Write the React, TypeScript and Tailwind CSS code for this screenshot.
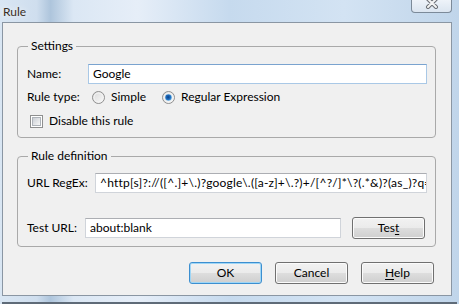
import React from "react";

const font = { fontFamily: 'Lato, "Noto Sans", sans-serif' };

function Radio({ checked }: { checked?: boolean }) {
  return (
    <svg width="13" height="13" viewBox="0 0 13 13" className="shrink-0">
      <defs>
        <linearGradient id="rg" x1="0" y1="0" x2="1" y2="1">
          <stop offset="0" stopColor="#d8d8d8" />
          <stop offset="1" stopColor="#fbfbfb" />
        </linearGradient>
        <radialGradient id="rd" cx="0.45" cy="0.45" r="0.6">
          <stop offset="0" stopColor="#0b3f87" />
          <stop offset="0.6" stopColor="#1f6fc0" />
          <stop offset="1" stopColor="#79c2f2" />
        </radialGradient>
      </defs>
      <circle cx="6.5" cy="6.5" r="6" fill="url(#rg)" stroke="#8f8f8f" />
      <circle cx="6.5" cy="6.5" r="4.5" fill="none" stroke="#f4f4f4" />
      {checked && <circle cx="6.5" cy="6.5" r="3.3" fill="url(#rd)" />}
    </svg>
  );
}

function Check() {
  return (
    <div className="w-[13px] h-[13px] shrink-0 border border-[#8e8f8f] bg-white p-[1px]">
      <div className="w-full h-full border border-[#aeb3b9] bg-[linear-gradient(135deg,#cbcfd5,#f7f7f7)]" />
    </div>
  );
}

function Btn({ children, focused, className = "" }: any) {
  return (
    <div
      className={`w-[73px] h-[22px] shrink-0 rounded-[3px] border flex items-center justify-center text-[12px] text-black bg-[linear-gradient(#f2f2f2_0%,#ebebeb_48%,#dddddd_52%,#cfcfcf_100%)] ${
        focused
          ? "border-[#3c8fd0] shadow-[inset_0_0_0_1px_#9fd6f6]"
          : "border-[#707070] shadow-[inset_0_0_0_1px_#fbfbfb]"
      } ${className}`}
    >
      {children}
    </div>
  );
}

function TextBox({ value, className = "", blue }: any) {
  return (
    <div
      className={`h-[20px] min-w-0 bg-white border overflow-hidden whitespace-nowrap flex items-center px-[4px] text-[12px] text-black ${
        blue ? "border-[#a9c8e6] border-t-[#7aa3cf]" : "border-[#d0d4da] border-t-[#acaeb3]"
      } ${className}`}
    >
      {value}
    </div>
  );
}

export default function App() {
  return (
    <div
      className="w-[459px] h-[304px] overflow-hidden flex flex-col bg-[linear-gradient(90deg,#d9e6f3_0%,#cfdeee_8%,#aec5dc_11%,#dbe7f4_16%,#e6eef8_30%,#c6daee_50%,#d3e3f3_75%,#c0d5ea_100%)] text-[12px]"
      style={font}
    >
      {/* title bar */}
      <div className="h-[22px] shrink-0 flex items-start justify-between pl-[3px] pr-[7px]">
        <span className="mt-[3px] text-[12px] text-[#3a2f25] [text-shadow:0_0_6px_#ffffff]">Rule</span>
        <div className="w-[41px] h-[13px] rounded-b-[4px] border border-t-0 border-[#7c8a99] bg-[linear-gradient(#eef3f9,#dbe5f0)] flex items-start justify-center overflow-hidden">
          <svg width="14" height="12" viewBox="0 0 14 12" className="-mt-[3px]">
            <path d="M3 2 L11 10 M11 2 L3 10" stroke="#6b6f75" strokeWidth="4" strokeLinecap="round" />
            <path d="M3 2 L11 10 M11 2 L3 10" stroke="#f4f4f4" strokeWidth="2" strokeLinecap="round" />
          </svg>
        </div>
      </div>

      {/* client area */}
      <div className="ml-[2px] mr-[7px] h-[274px] shrink-0 border border-[#8a96a3] bg-[#f0f0f0] flex flex-col pl-[14px] pr-[15px] pt-[15px]">
        <fieldset className="min-w-0 border border-[#a9a9a9] rounded-[4px] pl-[9px] pr-[8px] pt-[10px] pb-[8px] flex flex-col">
          <legend className="ml-[1px] px-[3px] leading-[16px] text-black">Settings</legend>
          <div className="flex items-center h-[20px]">
            <span className="w-[61px] shrink-0">Name:</span>
            <TextBox value="Google" blue className="flex-1" />
          </div>
          <div className="flex items-center h-[16px] mt-[5px]">
            <span className="w-[65px] shrink-0">Rule type:</span>
            <div className="w-[70px] flex items-center gap-[6px]">
              <Radio />
              <span>Simple</span>
            </div>
            <div className="flex items-center gap-[6px]">
              <Radio checked />
              <span>Regular Expression</span>
            </div>
          </div>
          <div className="flex items-center h-[16px] mt-[8px] pl-[3px] gap-[6px]">
            <Check />
            <span>Disable this rule</span>
          </div>
        </fieldset>

        <fieldset className="min-w-0 mt-[10px] border border-[#a9a9a9] rounded-[4px] pl-[9px] pr-[8px] pt-[9px] pb-[7px] flex flex-col">
          <legend className="ml-[1px] px-[3px] leading-[16px] text-black">Rule definition</legend>
          <div className="flex items-center h-[19px]">
            <span className="w-[68px] shrink-0">URL RegEx:</span>
            <TextBox
              value="^http[s]?://([^.]+\.)?google\.([a-z]+\.?)+/[^?/]*\?(.*&)?(as_)?q=([^&]*)"
              className="flex-1 h-[19px] tracking-[0.22px]"
            />
          </div>
          <div className="flex items-center h-[22px] mt-[25px]">
            <span className="w-[58px] shrink-0">Test URL:</span>
            <TextBox value="about:blank" className="w-[256px]" />
            <Btn className="ml-[11px]">
              <span>
                Tes<span className="underline underline-offset-2">t</span>
              </span>
            </Btn>
          </div>
        </fieldset>

        <div className="flex justify-end gap-[13px] mt-[15px] mr-[2px]">
          <Btn focused>OK</Btn>
          <Btn>Cancel</Btn>
          <Btn>
            <span>
              <span className="underline underline-offset-2">H</span>elp
            </span>
          </Btn>
        </div>
      </div>
      <div className="flex-1 flex flex-col justify-end">
        <div className="h-[2px] bg-[#5f6b78] ml-[2px] mr-[2px]" />
      </div>
    </div>
  );
}
